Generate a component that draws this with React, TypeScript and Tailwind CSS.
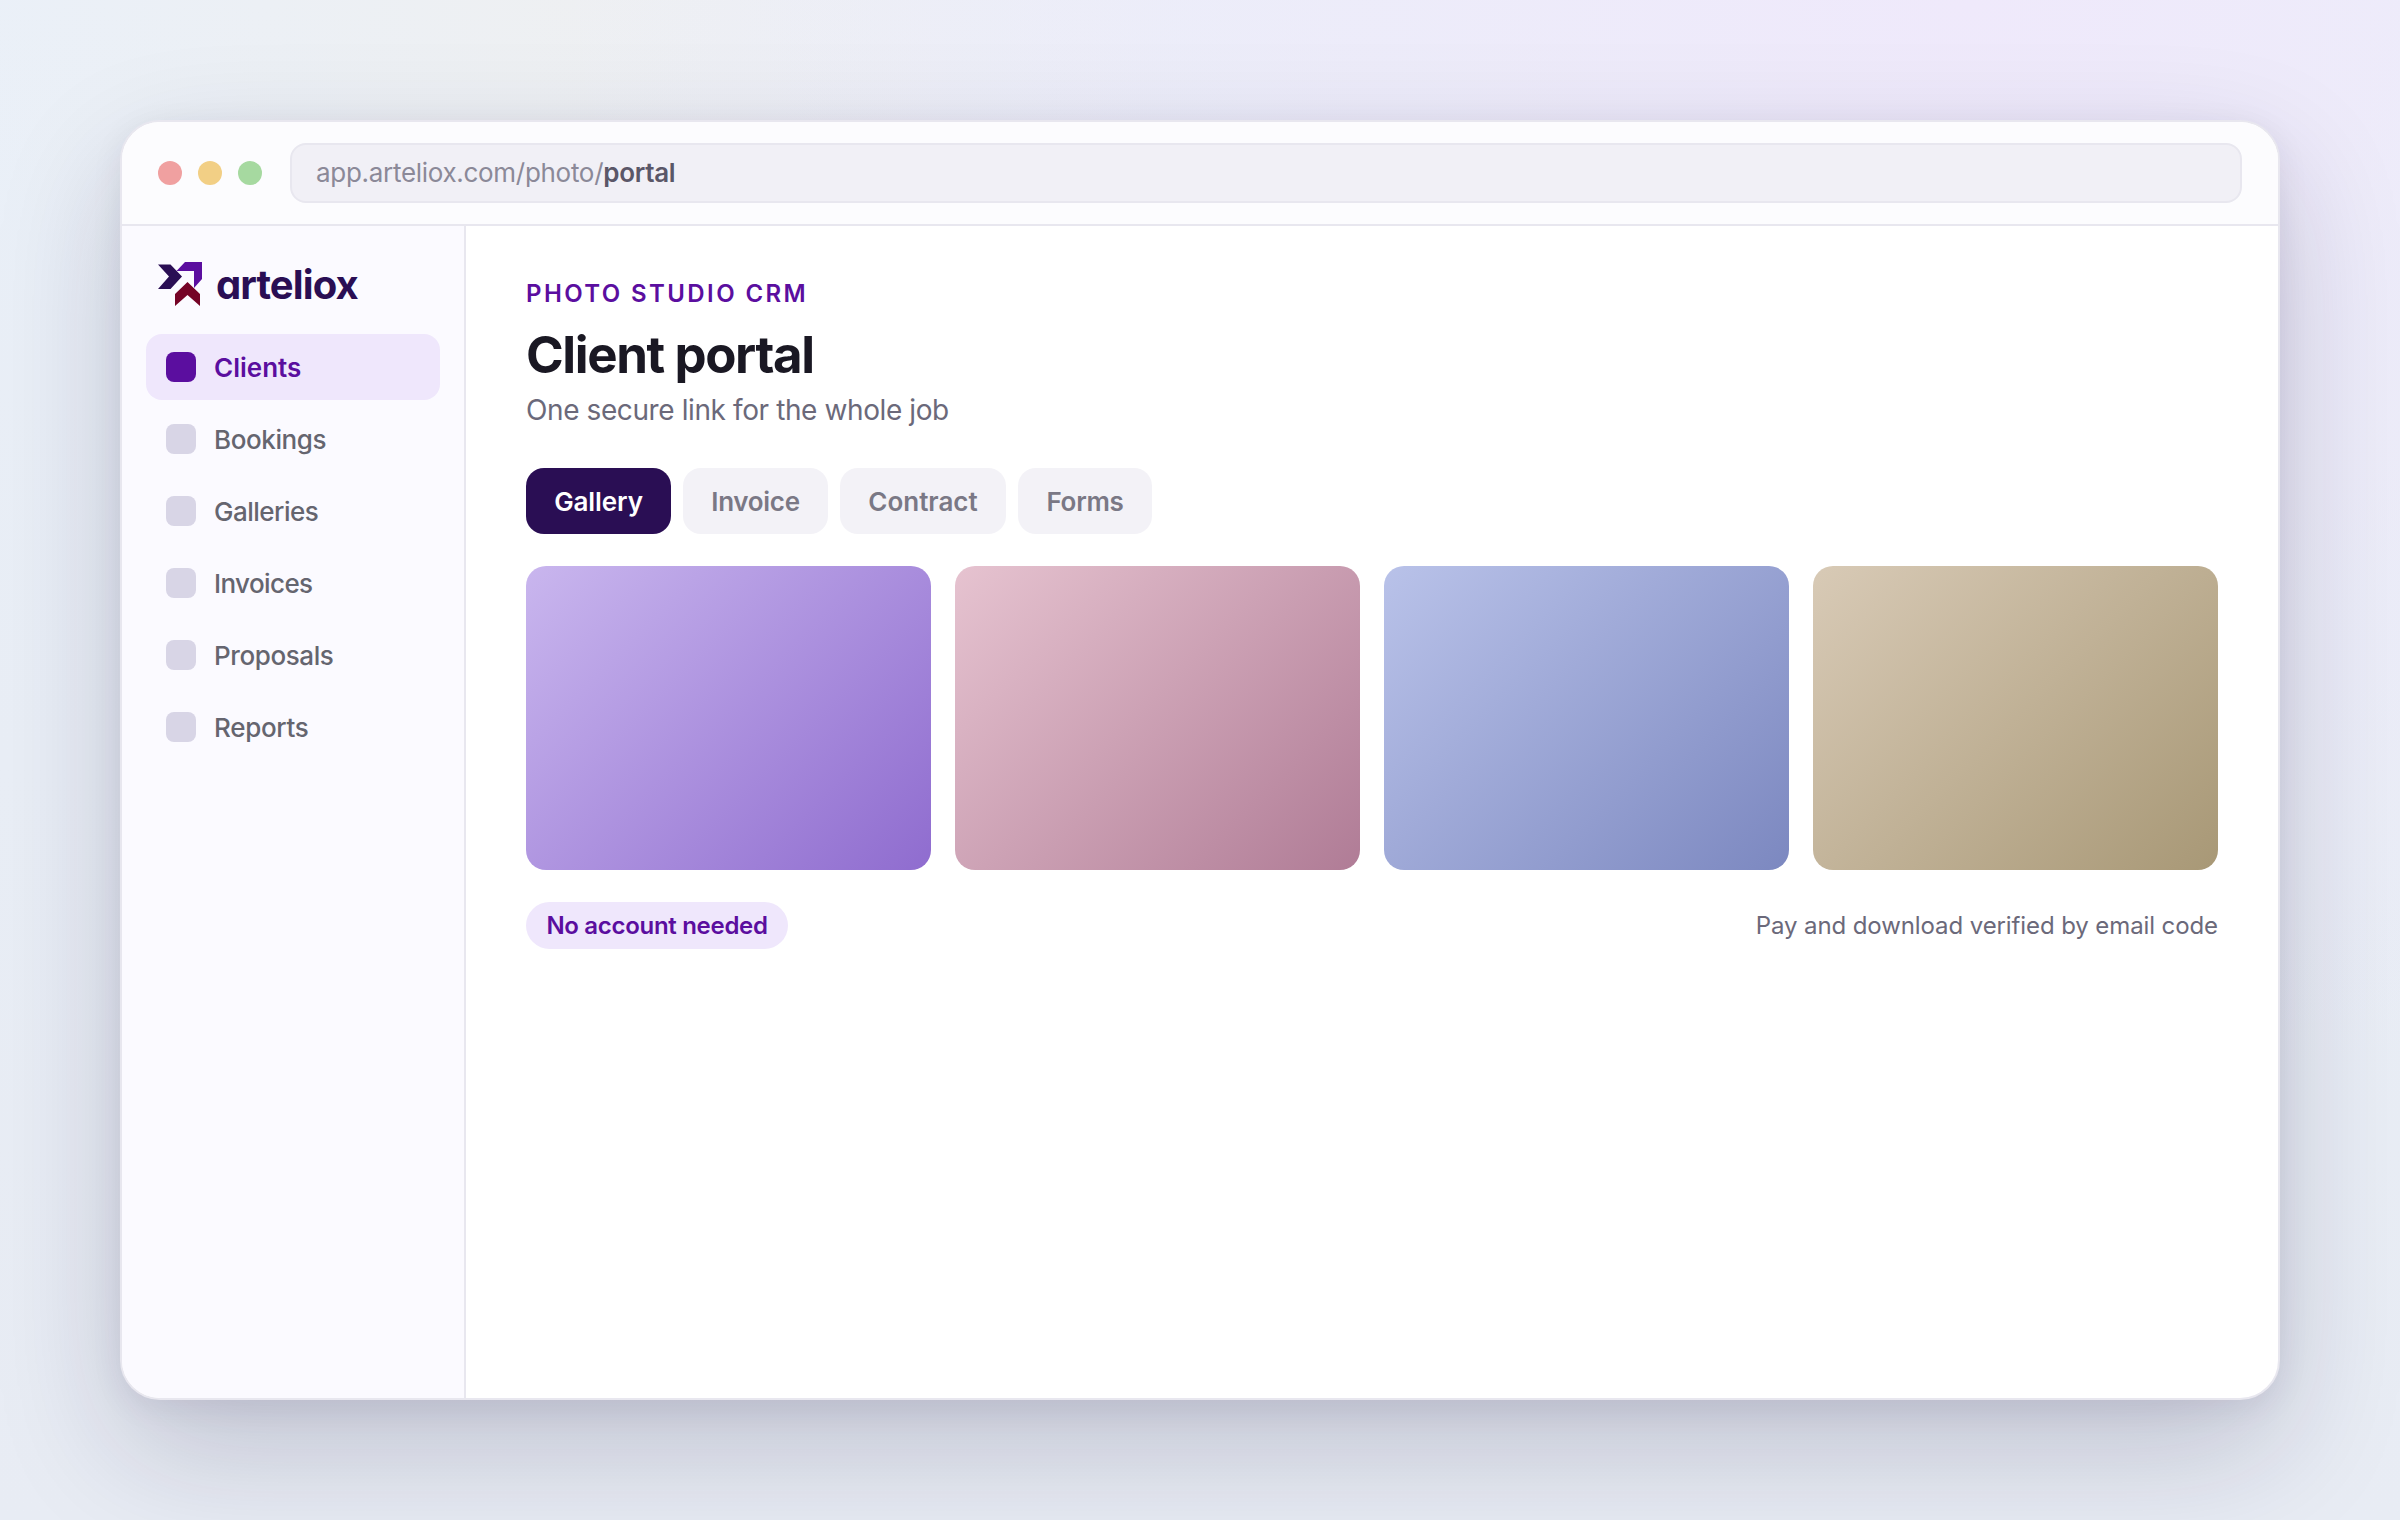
const navItems = [
  { label: 'Clients', text: 'tracking-[0]' },
  { label: 'Bookings', text: 'tracking-[-0.4px]' },
  { label: 'Galleries', text: 'tracking-[-0.5px]' },
  { label: 'Invoices', text: 'tracking-[-0.6px]' },
  { label: 'Proposals', text: 'tracking-[-0.4px]' },
  { label: 'Reports', text: 'tracking-[-0.3px]' },
];

const tabs = [
  { label: 'Gallery', width: 'w-[145px]', text: 'tracking-[-0.1px]' },
  { label: 'Invoice', width: 'w-[145px]', text: 'tracking-[-0.3px]' },
  { label: 'Contract', width: 'w-[166px]', text: 'tracking-[0]' },
  { label: 'Forms', width: 'w-[134px]', text: 'tracking-[-0.3px]' },
];

const photos = [
  'from-[#c9b6ee] to-[#8f6ccf]',
  'from-[#e6c3d0] to-[#b07c96]',
  'from-[#b9c2e9] to-[#7c88c0]',
  'from-[#d8cab6] to-[#a89876]',
];

function Logo() {
  return (
    <div className="flex items-center gap-[14px]">
      <svg width="44" height="44" viewBox="0 0 44 44">
        <path d="M0 2.5H12.500L24 14.5L12.500 27H0L11 14.5Z" fill="#2a0e54" />
        <path d="M27 0H44V17L36 26V9H18.500Z" fill="#5b0e9f" />
        <path d="M29.500 20L42 32V44L29.500 33L17 44V32Z" fill="#750326" />
      </svg>
      <span className="pt-0.5 text-[40px] leading-none font-bold tracking-[-0.9px] text-[#2a0e54] [font-feature-settings:'cv11']">arteliox</span>
    </div>
  );
}

function Sidebar() {
  return (
    <aside className="w-[344px] shrink-0 border-r-2 border-[#e8e7ef] bg-[#fbfaff] px-6 pt-9">
      <div className="mb-7 h-11 px-3">
        <Logo />
      </div>
      <nav className="flex flex-col gap-1.5">
        {navItems.map((item, i) => (
          <div
            key={item.label}
            className={`flex h-[66px] items-center gap-[18px] rounded-[16px] px-5 text-[26px] ${item.text} ${i === 0 ? 'bg-[#efe7fc] font-semibold text-[#5b0e9f]' : 'font-medium text-[#65656f]'}`}
          >
            <span className={`size-[30px] rounded-[8px] ${i === 0 ? 'bg-[#5b0e9f]' : 'bg-[#d8d5e6]'}`} />
            {item.label}
          </div>
        ))}
      </nav>
    </aside>
  );
}

export default function App() {
  return (
    <div className="h-[1520px] w-[2400px] bg-[radial-gradient(ellipse_at_82%_0%,#efe9fb_0%,transparent_52%),radial-gradient(ellipse_at_24%_0%,#eef0f2_0%,transparent_24%),linear-gradient(#eaf0f8,#e8ecf4)] p-[120px] font-[Inter,sans-serif]">
      <div className="flex h-[1280px] flex-col overflow-hidden rounded-[40px] border-2 border-[#e8e7ef] bg-white shadow-[0_48px_128px_rgba(26,20,60,0.2),0_8px_32px_rgba(26,20,60,0.07)]">
        <header className="flex h-[104px] shrink-0 items-center border-b-2 border-[#e8e7ef] bg-[#fcfcfe] px-9">
          <div className="mr-7 flex gap-4">
            <span className="size-6 rounded-full bg-[#f0a0a0]" />
            <span className="size-6 rounded-full bg-[#f2cf85]" />
            <span className="size-6 rounded-full bg-[#a6d9a0]" />
          </div>
          <div className="flex h-[60px] flex-1 items-center rounded-[16px] border-2 border-[#e8e7ef] bg-[#f1f0f6] px-6 pb-px text-[26px] tracking-[-0.3px] text-[#8b8998]">
            app.arteliox.com/photo/<span className="font-semibold text-[#5a5768]">portal</span>
          </div>
        </header>

        <div className="flex min-h-0 flex-1">
          <Sidebar />
          <main className="flex-1 px-[60px] pt-[53px]">
            <div className="text-[24px] leading-[30px] font-semibold tracking-[2.4px] text-[#5b0e9f]">PHOTO STUDIO CRM</div>
            <h1 className="mt-4 text-[51px] leading-[60px] font-bold tracking-[-1.400px] text-[#1a1823]">Client portal</h1>
            <p className="mt-2 text-[28px] leading-[34px] tracking-[-0.400px] text-[#6b697a]">One secure link for the whole job</p>

            <div className="mt-[41px] flex gap-3">
              {tabs.map((tab, i) => (
                <button
                  key={tab.label}
                  className={`${tab.width} ${tab.text} h-[66px] rounded-[18px] text-[26px] font-semibold whitespace-nowrap ${i === 0 ? 'bg-[#2a0e54] text-white' : 'bg-[#f3f2f7] text-[#7a7885]'}`}
                >
                  {tab.label}
                </button>
              ))}
            </div>

            <div className="mt-8 grid grid-cols-4 gap-6">
              {photos.map(photo => (
                <div key={photo} className={`aspect-[4/3] rounded-[20px] bg-linear-[135deg] ${photo}`} />
              ))}
            </div>

            <div className="mt-8 flex items-center justify-between">
              <span className="flex h-[47px] w-[262px] items-center justify-center rounded-full bg-[#efe7fc] pt-px text-[24px] font-semibold tracking-[-0.3px] whitespace-nowrap text-[#5b0e9f]">No account needed</span>
              <span className="pt-px text-[24px] tracking-[-0.1px] text-[#6b697a]">Pay and download verified by email code</span>
            </div>
          </main>
        </div>
      </div>
    </div>
  );
}
